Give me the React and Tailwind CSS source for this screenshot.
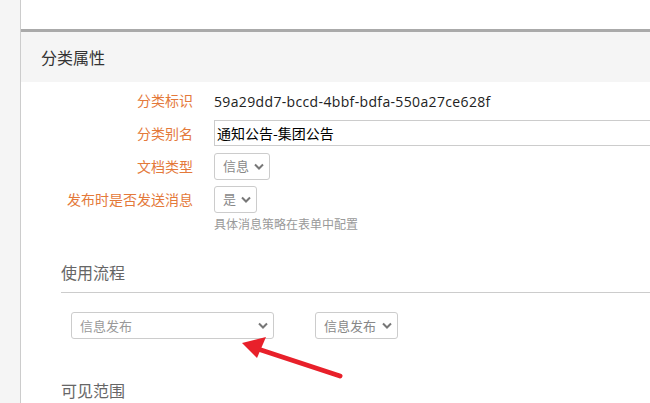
const font = { fontFamily: '"Noto Sans CJK SC", "Liberation Sans", sans-serif' };

const Chevron = () => (
  <svg width="10" height="7" viewBox="0 0 10 7" className="shrink-0">
    <path d="M1 1.5 L5 5.5 L9 1.5" fill="none" stroke="#777" strokeWidth="2" />
  </svg>
);

const Select = ({ text, className }) => (
  <div
    className={
      "flex items-center justify-between h-[27px] border border-[#ccc] rounded-[3px] pl-[8px] pr-[5px] text-[13px] text-[#888] bg-white " +
      className
    }
  >
    <span>{text}</span>
    <Chevron />
  </div>
);

const Row = ({ label, children }) => (
  <div className="flex items-center h-[26px]">
    <div className="w-[172px] shrink-0 text-right text-[14px] text-[#e4793a]">{label}</div>
    <div className="ml-[21px] flex-1 min-w-0">{children}</div>
  </div>
);

const App = () => {
  return (
    <div className="relative flex w-[650px] h-[403px] overflow-hidden bg-white" style={font}>
      <div className="w-[21px] shrink-0 bg-[#f5f5f5] border-r border-[#ccc]" />

      <div className="flex-1 min-w-0">
        <div className="h-[29px]" />
        <div className="h-[3px] bg-[#aaa]" />
        <div className="h-[50px] bg-[#f5f5f5] flex items-center pl-[20px] pb-[1px] text-[16px] text-[#333]">
          分类属性
        </div>

        {/* 表单 */}
        <div className="mt-[5px] flex flex-col gap-[7px]">
          <Row label="分类标识">
            <span className="text-[14px] text-[#222] tracking-[0.35px]" style={{ fontFamily: '"Open Sans", sans-serif' }}>
              59a29dd7-bccd-4bbf-bdfa-550a27ce628f
            </span>
          </Row>
          <Row label="分类别名">
            <div className="h-[26px] w-[460px] border border-[#ccc] flex items-center pl-[2px] text-[14px] text-black">
              通知公告-集团公告
            </div>
          </Row>
          <Row label="文档类型">
            <Select text="信息" className="w-[56px]" />
          </Row>
          <Row label="发布时是否发送消息">
            <Select text="是" className="w-[43px]" />
          </Row>
        </div>
        <div className="ml-[193px] mt-[4px] text-[12px] leading-[16px] text-[#999]">具体消息策略在表单中配置</div>

        {/* 使用流程 */}
        <div className="ml-[40px] mt-[28px]">
          <div className="text-[16px] leading-[24px] text-[#666] pb-[8px] border-b border-[#ccc]">使用流程</div>
          <div className="flex items-center mt-[19px] pl-[10px] gap-[41px]">
            <Select text="信息发布" className="w-[203px] text-[#999] pr-[4px]" />
            <Select text="信息发布" className="w-[83px]" />
          </div>
          <div className="mt-[39px] text-[16px] leading-[24px] text-[#666]">可见范围</div>
        </div>
      </div>

      {/* 红色箭头 */}
      <svg className="absolute left-0 top-0 pointer-events-none" width="650" height="403">
        <line x1="340" y1="376" x2="258" y2="349" stroke="#e8202a" strokeWidth="5" strokeLinecap="round" />
        <polygon points="242,343 266,337 257,358" fill="#e8202a" />
      </svg>
    </div>
  );
};

export default App;
